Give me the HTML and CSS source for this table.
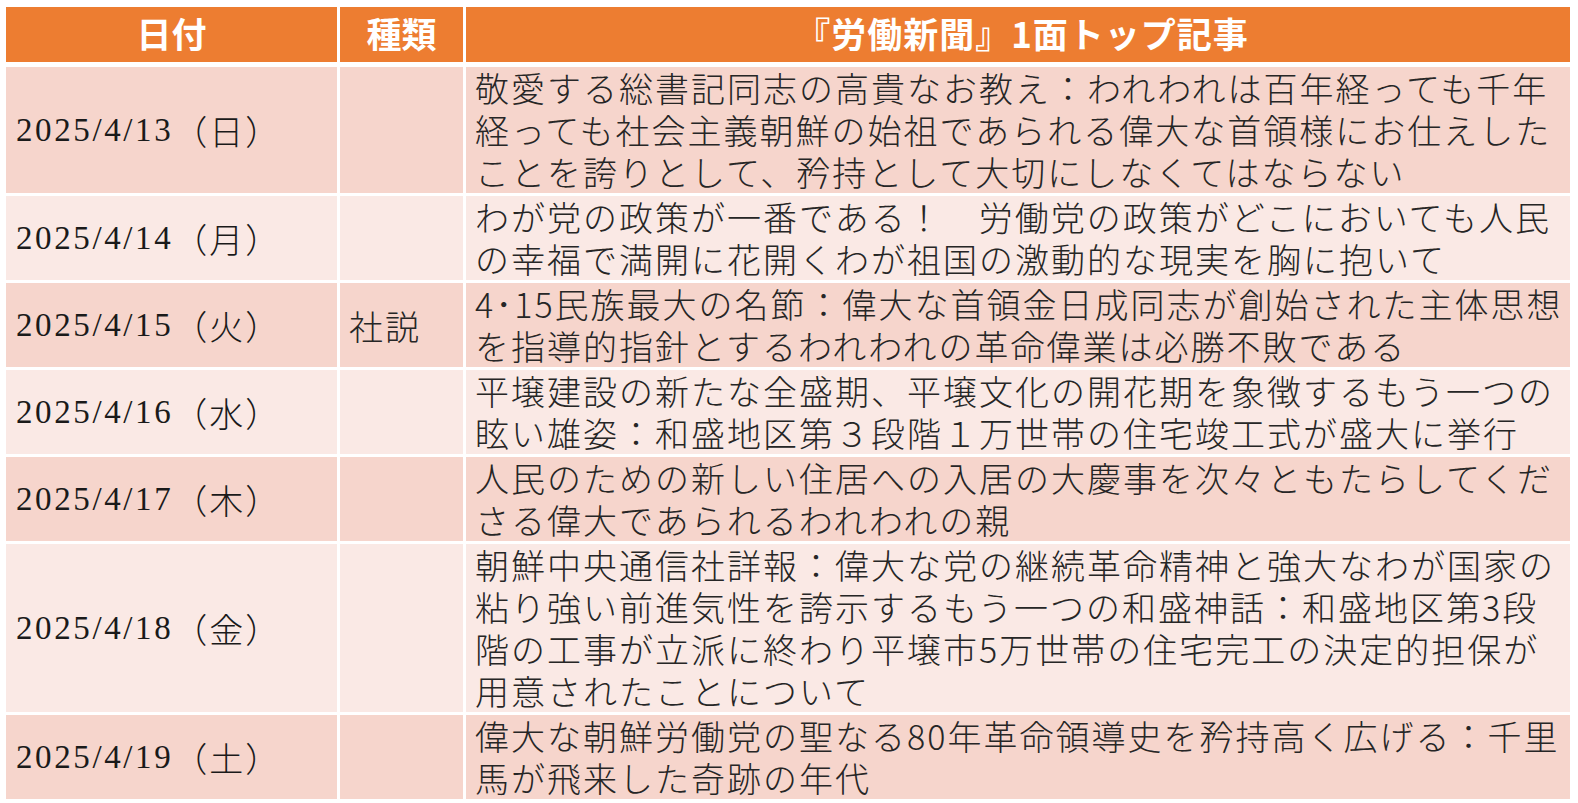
FILE: index.html
```html
<!DOCTYPE html>
<html lang="ja">
<head>
<meta charset="utf-8">
<title>労働新聞 1面トップ記事</title>
<link rel="stylesheet" href="styles.css">
</head>
<body>
<div class="sheet">
  <div class="hd">日付</div>
  <div class="hd">種類</div>
  <div class="hd hd-wide">『労働新聞』1面トップ記事</div>

  <div class="date dark"><span class="num">2025/4/13</span><span class="day">（日）</span></div>
  <div class="kind dark"></div>
  <div class="title dark">敬愛する総書記同志の高貴なお教え：われわれは百年経っても千年<br>経っても社会主義朝鮮の始祖であられる偉大な首領様にお仕えした<br>ことを誇りとして、矜持として大切にしなくてはならない</div>

  <div class="date light"><span class="num">2025/4/14</span><span class="day">（月）</span></div>
  <div class="kind light"></div>
  <div class="title light">わが党の政策が一番である！　労働党の政策がどこにおいても人民<br>の幸福で満開に花開くわが祖国の激動的な現実を胸に抱いて</div>

  <div class="date dark"><span class="num">2025/4/15</span><span class="day">（火）</span></div>
  <div class="kind dark">社説</div>
  <div class="title dark">4･15民族最大の名節：偉大な首領金日成同志が創始された主体思想<br>を指導的指針とするわれわれの革命偉業は必勝不敗である</div>

  <div class="date light"><span class="num">2025/4/16</span><span class="day">（水）</span></div>
  <div class="kind light"></div>
  <div class="title light">平壌建設の新たな全盛期、平壌文化の開花期を象徴するもう一つの<br>眩い雄姿：和盛地区第３段階１万世帯の住宅竣工式が盛大に挙行</div>

  <div class="date dark"><span class="num">2025/4/17</span><span class="day">（木）</span></div>
  <div class="kind dark"></div>
  <div class="title dark">人民のための新しい住居への入居の大慶事を次々ともたらしてくだ<br>さる偉大であられるわれわれの親</div>

  <div class="date light"><span class="num">2025/4/18</span><span class="day">（金）</span></div>
  <div class="kind light"></div>
  <div class="title light">朝鮮中央通信社詳報：偉大な党の継続革命精神と強大なわが国家の<br>粘り強い前進気性を誇示するもう一つの和盛神話：和盛地区第3段<br>階の工事が立派に終わり平壌市5万世帯の住宅完工の決定的担保が<br>用意されたことについて</div>

  <div class="date dark"><span class="num">2025/4/19</span><span class="day">（土）</span></div>
  <div class="kind dark"></div>
  <div class="title dark">偉大な朝鮮労働党の聖なる80年革命領導史を矜持高く広げる：千里<br>馬が飛来した奇跡の年代</div>
</div>
</body>
</html>
```

FILE: styles.css
```css
html, body {
  margin: 0;
  padding: 0;
  background: #ffffff;
}

.sheet {
  display: grid;
  grid-template-columns: 331px 123px 1104px;
  column-gap: 3px;
  row-gap: 3px;
  padding: 7px 0 0 6px;
  font-family: "Noto Sans CJK JP Light", "Noto Sans CJK JP", "Noto Sans", sans-serif;
  color: #262626;
}

.hd {
  height: 55px;
  margin-bottom: 2px;
  background: #ed7d31;
  color: #ffffff;
  font-family: "Noto Sans CJK JP", "Noto Sans", sans-serif;
  font-weight: 700;
  font-size: 35px;
  line-height: 52px;
  text-align: center;
  white-space: nowrap;
}

.hd-wide {
  letter-spacing: 1px;
  padding-left: 8px;
}

.dark { background: #f6d5cc; }
.light { background: #fae9e5; }

.date {
  display: flex;
  align-items: center;
  padding-left: 10px;
  white-space: nowrap;
}

.num {
  font-family: "Liberation Serif", "Times New Roman", serif;
  font-size: 33px;
  letter-spacing: 2.6px;
  color: #1a1a1a;
}

.day {
  font-size: 34px;
  font-weight: 300;
  letter-spacing: 2px;
  color: #1a1a1a;
}

.kind {
  display: flex;
  align-items: center;
  padding-left: 9px;
  font-size: 34px;
  font-weight: 300;
  letter-spacing: 2px;
}

.title {
  padding-left: 9px;
  font-size: 34px;
  font-weight: 300;
  letter-spacing: 2px;
  line-height: 42px;
  white-space: nowrap;
}
```
